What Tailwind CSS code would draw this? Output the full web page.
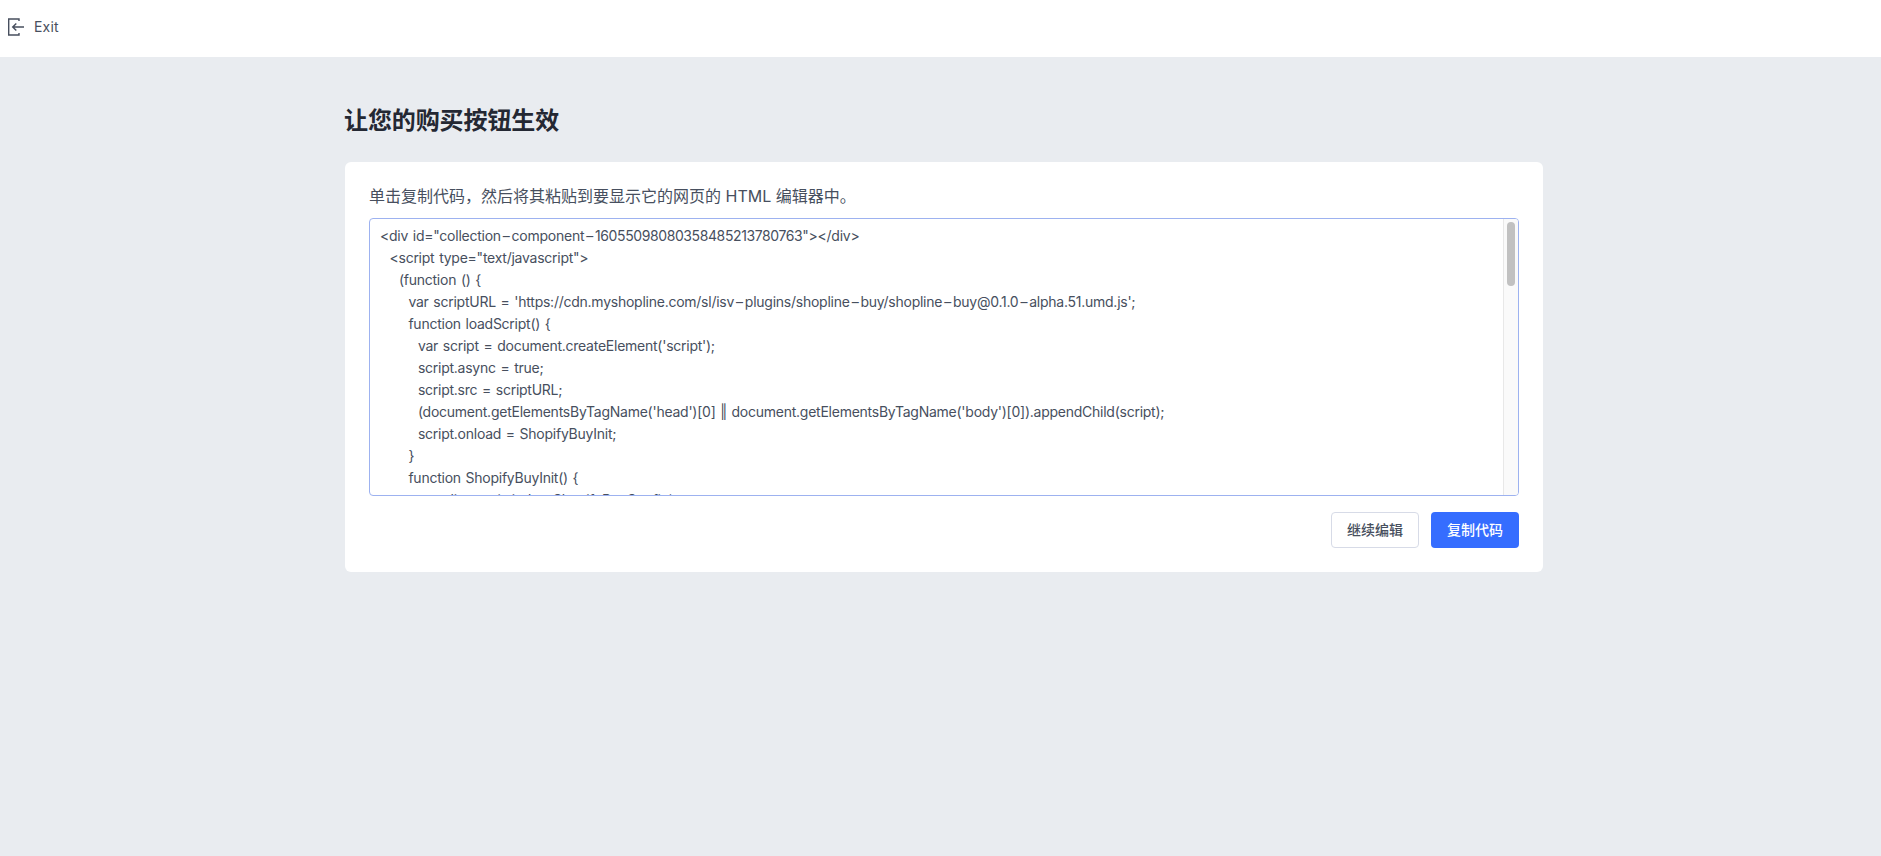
<html>
  <head>
    <title>Buy Button</title>
    <meta name="viewport" content="width=device-width, initial-scale=1.0" />
    <script src="https://cdn.jsdelivr.net/npm/@tailwindcss/browser@4"></script>
  </head>

  <body class="bg-[#e9ecf0] min-h-screen font-['Inter','Noto_Sans_CJK_SC',sans-serif]">
    <!-- Top bar -->
    <nav class="bg-white h-[57px] flex items-center pl-2 pb-[3px]">
      <a href="#" class="flex items-center gap-[9px] text-sm tracking-[0.2px] text-[#474f5e]">
        <svg class="w-[17px] h-[18px]" viewBox="0 0 17 18" fill="none" stroke="#474f5e" stroke-width="1.4">
          <path d="M11 3V1H.7v16H11v-2" />
          <path d="M16 9H4.5M8.3 5.4 4.7 9l3.6 3.6" />
        </svg>
        <span>Exit</span>
      </a>
    </nav>

    <!-- Content -->
    <main class="w-[1198px] ml-[345px]">
      <h1 class="mt-[48px] -ml-px text-2xl leading-[32px] font-semibold text-[#242833] tracking-[-0.1px]">让您的购买按钮生效</h1>

      <div class="mt-[25px] bg-white rounded-md h-[410px] px-6 pt-[22px]">
        <p class="text-base leading-6 text-[#474f5e]">单击复制代码，然后将其粘贴到要显示它的网页的 HTML 编辑器中。</p>

        <div class="relative mt-[10px] h-[278px] overflow-hidden rounded border border-[#9db2f0] bg-white">
          <!-- Code lines -->
          <div class="pt-[6px] pl-[10px] text-sm leading-[22px] text-[#474f5e] tracking-[-0.25px] [word-spacing:1.05px]">
            <div class="whitespace-pre">&lt;div id="collection<span class="mx-[2px]">–</span>component<span class="mx-[2px]">–</span><span class="tracking-[-0.4px]">16055098080358485213780763</span>"&gt;&lt;/div&gt;</div>
            <div class="whitespace-pre">  &lt;script type="text/javascript"&gt;</div>
            <div class="whitespace-pre">    (function () {</div>
            <div class="whitespace-pre">      var scriptURL = 'https://cdn.myshopline.com/sl/isv<span class="mx-[2px]">–</span>plugins/shopline<span class="mx-[2px]">–</span>buy/shopline<span class="mx-[2px]">–</span>buy@0.1.0<span class="mx-[2px]">–</span>alpha.51.umd.js';</div>
            <div class="whitespace-pre">      function loadScript() {</div>
            <div class="whitespace-pre">        var script = document.createElement('script');</div>
            <div class="whitespace-pre">        script.async = true;</div>
            <div class="whitespace-pre">        script.src = scriptURL;</div>
            <div class="whitespace-pre">        (document.getElementsByTagName('head')[0] <span class="tracking-[-2.5px]">|</span>| document.getElementsByTagName('body')[0]).appendChild(script);</div>
            <div class="whitespace-pre">        script.onload = ShopifyBuyInit;</div>
            <div class="whitespace-pre">      }</div>
            <div class="whitespace-pre">      function ShopifyBuyInit() {</div>
            <div class="whitespace-pre">        var client = (window.ShopifyBuyConfig);</div>
          </div>
          <!-- Scrollbar -->
          <div class="absolute top-0 bottom-0 right-0 w-[15px] bg-[#fafafa] border-l border-[#e8e8e8]">
            <div class="mt-[3px] ml-[3px] w-2 h-[64px] rounded bg-[#c1c1c1]"></div>
          </div>
        </div>

        <div class="mt-4 flex justify-end gap-3">
          <button class="w-[88px] h-9 rounded border border-[#d7dbe7] bg-white text-sm font-medium text-[#474f5e]">继续编辑</button>
          <button class="w-[88px] h-9 rounded bg-[#356dff] text-sm font-medium text-white">复制代码</button>
        </div>
      </div>
    </main>
  </body>
</html>
